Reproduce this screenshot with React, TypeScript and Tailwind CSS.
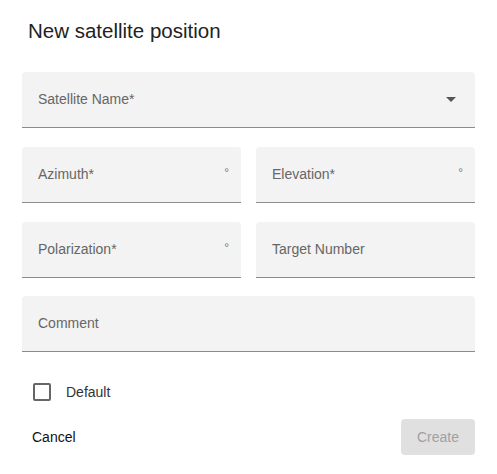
/** New satellite position dialog form. */

function Field({ label, suffix, select }: { label: string; suffix?: string; select?: boolean }) {
    return (
        <div className="flex h-[56px] items-center rounded-t bg-[#f3f3f3] border-b border-[#8c8c8c] pl-4 pr-3">
            <span className="flex-1 text-[14px] text-[#666]">{label}</span>
            {suffix && <span className="text-[12px] text-[#777] -mt-1">{suffix}</span>}
            {select && (
                <svg width="10" height="5" viewBox="0 0 10 5" className="mr-[7px]">
                    <path d="M0 0 L10 0 L5 5 Z" fill="#555" />
                </svg>
            )}
        </div>
    );
}

export default function App() {
    return (
        <div className="w-[497px] h-[474px] bg-white px-[22px] pt-[18px] font-['Liberation_Sans',Arial,sans-serif]">
            <h2 className="pl-[6px] text-[20.5px] leading-[26px] text-[#222] mb-[28px]">New satellite position</h2>
            <div className="flex flex-col gap-[19px]">
                <Field label="Satellite Name*" select />
                <div className="grid grid-cols-2 gap-[15px]">
                    <Field label="Azimuth*" suffix="°" />
                    <Field label="Elevation*" suffix="°" />
                </div>
                <div className="grid grid-cols-2 gap-[15px]">
                    <Field label="Polarization*" suffix="°" />
                    <Field label="Target Number" />
                </div>
                <div className="-mt-px">
                    <Field label="Comment" />
                </div>
            </div>
            <label className="flex items-center mt-[30px] pl-[11px] h-[20px]">
                <span className="w-[18px] h-[18px] rounded-[2px] border-2 border-[#666]" />
                <span className="ml-[15px] text-[14px] text-[#333]">Default</span>
            </label>
            <div className="flex items-center justify-between mt-[17px]">
                <button className="pl-[10px] text-[14px] text-[#111]">Cancel</button>
                <button disabled className="w-[74px] h-[36px] rounded bg-[#e0e0e0] text-[14px] text-[#a0a0a0]">Create</button>
            </div>
        </div>
    );
}
